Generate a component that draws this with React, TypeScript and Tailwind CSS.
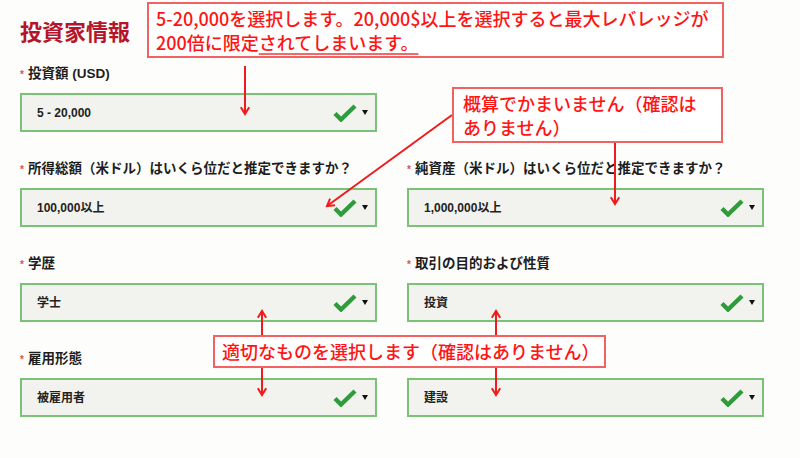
const jp = { fontFamily: '"Noto Sans CJK JP", "Noto Sans", sans-serif' }
const mixed = { fontFamily: '"Liberation Sans", "Noto Sans CJK JP", sans-serif' }

interface Field {
  label: string
  value: string
}

const rows: (Field | null)[][] = [
  [{ label: "投資額 (USD)", value: "5 - 20,000" }, null],
  [
    { label: "所得総額（米ドル）はいくら位だと推定できますか？", value: "100,000以上" },
    { label: "純資産（米ドル）はいくら位だと推定できますか？", value: "1,000,000以上" },
  ],
  [
    { label: "学歴", value: "学士" },
    { label: "取引の目的および性質", value: "投資" },
  ],
  [
    { label: "雇用形態", value: "被雇用者" },
    { label: "", value: "建設" },
  ],
]

function Check() {
  return (
    <svg width="24" height="18" viewBox="0 0 24 18">
      <path d="M2 9.5 L8 15.5 L22 2" fill="none" stroke="#2f9c3c" strokeWidth="4.4" strokeLinejoin="miter" />
    </svg>
  )
}

function SelectBox({ value }: { value: string }) {
  return (
    <div className="flex h-[39px] items-center border-2 border-[#79c276] bg-[#f2f2ee] pl-[15px] pr-[7px]">
      <span className="flex-1 text-[12px] font-bold text-[#222]" style={mixed}>
        {value}
      </span>
      <Check />
      <svg className="ml-[5px]" width="6" height="5" viewBox="0 0 6 5">
        <path d="M0 0 H6 L3 5 Z" fill="#111" />
      </svg>
    </div>
  )
}

function FieldBlock({ field }: { field: Field | null }) {
  if (!field) return <div />
  return (
    <div className="flex flex-col">
      <div className="flex h-[20px] items-center text-[13.5px] font-bold text-[#1e1e1e]" style={mixed}>
        {field.label && (
          <>
            <span className="mr-[4px] text-[10px] text-[#d9534f]">*</span>
            {field.label}
          </>
        )}
      </div>
      <div className="mt-[9px]">
        <SelectBox value={field.value} />
      </div>
    </div>
  )
}

function arrow(x1: number, y1: number, x2: number, y2: number) {
  const a = Math.atan2(y2 - y1, x2 - x1)
  const l = 8
  const s = 0.55
  const p1 = `${x2 - l * Math.cos(a - s)},${y2 - l * Math.sin(a - s)}`
  const p2 = `${x2 - l * Math.cos(a + s)},${y2 - l * Math.sin(a + s)}`
  return (
    <g key={`${x1}-${y1}-${x2}-${y2}`}>
      <line x1={x1} y1={y1} x2={x2} y2={y2} />
      <polyline points={`${p1} ${x2},${y2} ${p2}`} fill="none" />
    </g>
  )
}

export default function App() {
  return (
    <div className="relative h-[458px] w-[800px] overflow-hidden bg-[#fdfdfb]">
      <div className="pl-[20px] pt-[16px]">
        <h1 className="h-[28px] text-[22px] font-bold leading-[28px] text-[#b5152b]" style={jp}>
          投資家情報
        </h1>
        <div className="mt-[20px] grid w-[744px] grid-cols-2 gap-x-[30px] gap-y-[27px]">
          {rows.map((r, i) => r.map((f, j) => <FieldBlock key={`${i}-${j}`} field={f} />))}
        </div>
      </div>

      <svg className="pointer-events-none absolute inset-0" width="800" height="458" stroke="#ee1c1c" strokeWidth="2">
        {arrow(245, 66, 245, 114)}
        {arrow(452, 115, 327, 206)}
        {arrow(615, 143, 615, 204)}
        {arrow(262, 335, 262, 311)}
        {arrow(262, 368, 262, 395)}
        {arrow(496, 335, 496, 311)}
        {arrow(496, 368, 496, 395)}
      </svg>

      <div
        className="absolute left-[147px] top-[2px] h-[56px] w-[577px] border-2 border-[#f26262] bg-white pl-[7px] pt-[2px] text-[18px] font-medium leading-[24px] text-[#ff1414]"
        style={jp}
      >
        <p>5-20,000を選択します。20,000$以上を選択すると最大レバレッジが</p>
        <p>
          200倍に限定
          <span className="underline decoration-[#f06a6a] decoration-2 underline-offset-[3px]">されてしまいます。</span>
        </p>
      </div>

      <div
        className="absolute left-[452px] top-[87px] h-[56px] w-[271px] border-2 border-[#f26262] bg-white pl-[9px] pt-[2px] text-[18px] font-medium leading-[24px] text-[#ff1414]"
        style={jp}
      >
        <p>概算でかまいません（確認は</p>
        <p>ありません）</p>
      </div>

      <div
        className="absolute left-[213px] top-[335px] flex h-[33px] w-[393px] items-center border-2 border-[#f26262] bg-white pl-[7px] text-[18px] font-medium text-[#ff1414]"
        style={jp}
      >
        適切なものを選択します（確認はありません）
      </div>
    </div>
  )
}
